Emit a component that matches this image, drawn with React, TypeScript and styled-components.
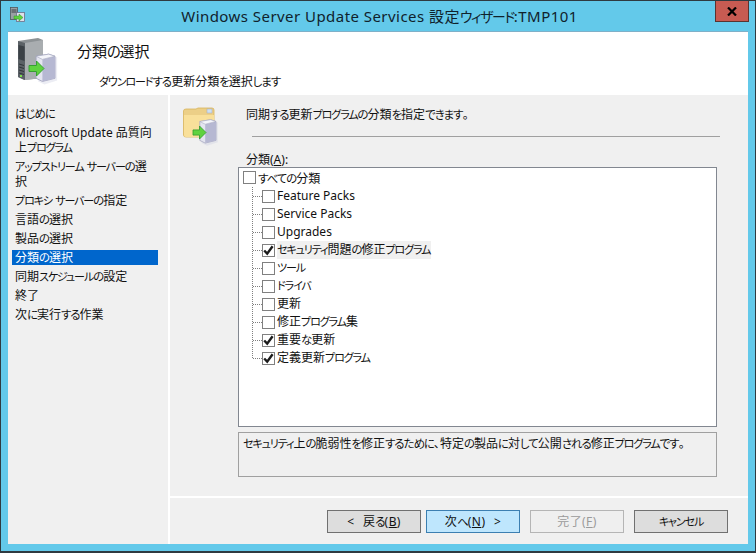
import React from 'react';
import styled, { createGlobalStyle } from 'styled-components';

const GlobalStyle = createGlobalStyle`
    html, body {
        margin: 0;
        padding: 0;
        width: 756px;
        height: 553px;
        overflow: hidden;
    }
    * {
        box-sizing: border-box;
    }
`;

const FONT = `"Noto Sans", "Noto Sans CJK JP", sans-serif`;

const Window = styled.div`
    width: 756px;
    height: 553px;
    background: #63c9ea;
    border: 1px solid #2f3a40;
    border-bottom-width: 2px;
    display: flex;
    flex-direction: column;
    font-family: ${FONT};
    font-size: 12px;
    font-feature-settings: 'palt';
    color: #111;
`;

const TitleBar = styled.div`
    height: 30px;
    display: flex;
    align-items: flex-start;
    padding-left: 9px;
    flex: none;
`;

const TitleIcon = styled.div`
    width: 16px;
    height: 16px;
    margin-top: 6px;
    flex: none;
`;

const TitleText = styled.div`
    flex: 1;
    text-align: center;
    font-size: 15px;
    line-height: 30px;
    margin-left: 18px;
    color: #10222c;
    letter-spacing: 0.45px;
`;

const CloseButton = styled.div`
    width: 34px;
    height: 21px;
    margin-right: 6px;
    background: #c75b52;
    border: 1px solid #5a3330;
    border-top: none;
    display: flex;
    align-items: center;
    justify-content: center;
    flex: none;
`;

const Client = styled.div`
    flex: 1;
    margin: 0 7px 7px;
    background: #fff;
    border-top: 1px solid #7fb0c8;
    display: flex;
    flex-direction: column;
    min-height: 0;
`;

const Header = styled.div`
    height: 63px;
    flex: none;
    display: flex;
    padding: 5px 0 0 9px;
`;

const HeaderIcon = styled.div`
    width: 44px;
    height: 48px;
    flex: none;
`;

const HeaderTexts = styled.div`
    display: flex;
    flex-direction: column;
    padding-left: 16px;
`;

const HeaderTitle = styled.div`
    font-size: 15px;
    line-height: 20px;
    margin-top: 4px;
`;

const HeaderSubtitle = styled.div`
    font-size: 12px;
    line-height: 16px;
    margin: 12px 0 0 22px;
`;

const Main = styled.div`
    flex: 1;
    display: flex;
    gap: 2px;
    min-height: 0;
`;

const Nav = styled.nav`
    width: 160px;
    flex: none;
    background: #f0f0f0;
    padding: 11px 10px 0 4px;
    display: flex;
    flex-direction: column;
    gap: 4px;
`;

const NavItem = styled.div<{ $active?: boolean }>`
    line-height: 15px;
    padding-left: 3px;
    white-space: pre-line;
    background: ${(p) => (p.$active ? '#0066cc' : 'transparent')};
    color: ${(p) => (p.$active ? '#fff' : '#111')};
`;

const Panel = styled.div`
    flex: 1;
    background: #f0f0f0;
    display: flex;
    flex-direction: column;
`;

const Content = styled.div`
    flex: 1;
    padding: 11px 31px 0 13px;
    display: flex;
    flex-direction: column;
`;

const IntroRow = styled.div`
    display: flex;
    height: 46px;
    flex: none;
`;

const FolderIcon = styled.div`
    width: 40px;
    height: 40px;
    flex: none;
`;

const IntroBody = styled.div`
    flex: 1;
    padding-left: 23px;
`;

const IntroText = styled.div`
    line-height: 16px;
    padding-top: 1px;
    margin-bottom: 13px;
`;

const IntroRule = styled.div`
    height: 1px;
    background: #a0a0a0;
    margin: 0 -3px 0 6px;
`;

const FieldLabel = styled.div`
    line-height: 15px;
    padding-left: 63px;
`;

const Underlined = styled.span`
    text-decoration: underline;
`;

const TreeBox = styled.div`
    height: 260px;
    margin-left: 55px;
    background: #fff;
    border: 1px solid #828790;
    padding: 1px 0 0 4px;
    flex: none;
`;

const RootRow = styled.div`
    display: flex;
    align-items: center;
    height: 17px;
    margin-bottom: 1px;
    gap: 2px;
`;

const TreeList = styled.div`
    margin-left: 9px;
    border-left: 1px dotted #808080;
    display: flex;
    flex-direction: column;
    height: 171px;
`;

const TreeRow = styled.div`
    position: relative;
    display: flex;
    align-items: center;
    gap: 2px;
    height: 18px;
    flex: none;
    padding-left: 9px;
    &::before {
        content: '';
        position: absolute;
        left: 0;
        top: 9px;
        width: 9px;
        border-top: 1px dotted #808080;
    }
`;

const RowLabel = styled.span<{ $selected?: boolean }>`
    line-height: 18px;
    white-space: nowrap;
    padding-right: 1px;
    background: ${(p) => (p.$selected ? '#f0f0f0' : 'transparent')};
`;

const Box = styled.span`
    width: 13px;
    height: 13px;
    border: 1px solid #808080;
    background: #fff;
    flex: none;
    display: flex;
    align-items: center;
    justify-content: center;
`;

const DescriptionBox = styled.div`
    height: 45px;
    margin: 5px 0 0 55px;
    border: 1px solid #a0a0a0;
    padding: 2px 4px;
    line-height: 17px;
    flex: none;
`;

const Footer = styled.div`
    height: 48px;
    flex: none;
    border-top: 2px solid #fff;
    display: flex;
    justify-content: flex-end;
    align-items: flex-start;
    padding: 12px 20px 0 0;
`;

const Button = styled.div<{ $variant?: 'default' | 'primary' | 'disabled' }>`
    width: 94px;
    height: 23px;
    margin-left: ${(p) => (p.$variant === 'primary' ? '5px' : '10px')};
    display: flex;
    align-items: center;
    justify-content: center;
    line-height: 21px;
    word-spacing: 5px;
    letter-spacing: 0.4px;
    white-space: pre;
    border: 1px solid
        ${(p) =>
            p.$variant === 'primary'
                ? '#3c7fb1'
                : p.$variant === 'disabled'
                  ? '#b5b5b5'
                  : '#707070'};
    background: ${(p) =>
        p.$variant === 'primary'
            ? '#bee6fd'
            : p.$variant === 'disabled'
              ? '#efefef'
              : '#dddddd'};
    color: ${(p) => (p.$variant === 'disabled' ? '#9a9a9a' : '#111')};
`;

// the reference font has narrow kana, so kana runs are set a bit smaller and tighter
const Kana = styled.span<{ $kind: 'hira' | 'kata' }>`
    font-size: ${(p) => (p.$kind === 'kata' ? '0.92em' : '0.95em')};
    letter-spacing: ${(p) => (p.$kind === 'kata' ? '-0.1em' : '-0.085em')};
`;

const Jp = ({ text }: { text: string }) => (
    <>
        {text.split(/([ァ-ヶー]+|[ぁ-ゖ]+)/).map((part, i) => {
            if (/^[ァ-ヶー]+$/.test(part)) {
                return (
                    <Kana key={i} $kind='kata'>
                        {part}
                    </Kana>
                );
            }
            if (/^[ぁ-ゖ]+$/.test(part)) {
                return (
                    <Kana key={i} $kind='hira'>
                        {part}
                    </Kana>
                );
            }
            return part;
        })}
    </>
);

const Check = () => (
    <svg width='11' height='11' viewBox='0 0 11 11'>
        <path d='M1.2 5.5 L4.2 8.6 L9.6 1.2' fill='none' stroke='#1c1c1c' strokeWidth='2.4' />
    </svg>
);

const Arrow = ({ x, y, s }: { x: number; y: number; s: number }) => (
    <path
        transform={`translate(${x} ${y}) scale(${s})`}
        d='M0 3 H5 V0 L10 5 L5 10 V7 H0 Z'
        fill='#5fd23f'
        stroke='#2f9a2a'
        strokeWidth='0.6'
    />
);

const Package = ({ x, y, s }: { x: number; y: number; s: number }) => (
    <g transform={`translate(${x} ${y}) scale(${s})`}>
        <path d='M2 5 L8 2 L20 4 V26 L8 30 L2 27 Z' fill='#c9cbe0' opacity='0.35' transform='translate(2 2)' />
        <path d='M2 5 L14 3 L20 5 V26 L8 29 L2 26 Z' fill='#e4e5ef' stroke='#a3a5bd' strokeWidth='0.8' />
        <path d='M8 8 L20 5 V26 L8 29 Z' fill='#b6b8d2' />
        <path d='M2 5 L14 3 L20 5 L8 8 Z' fill='#f4f5fa' stroke='#a3a5bd' strokeWidth='0.6' />
    </g>
);

const ServerGlyph = () => (
    <svg width='44' height='48' viewBox='0 0 44 48'>
        <path d='M1 4 L21 1 L26 3 V41 L7 43 L1 40 Z' fill='#8d9295' />
        <path d='M1 4 L8 6 V43 L1 40 Z' fill='#5b6166' />
        <path d='M8 6 L26 3 V41 L8 43 Z' fill='#a9adb0' />
        <path d='M1.5 8 L7.5 9.5 V24 L1.5 22 Z' fill='#3b4146' />
        <path d='M2 27 L7 28.5 M2 30 L7 31.5 M2 33 L7 34.5 M2 36 L7 37.5' stroke='#2f3438' strokeWidth='1' />
        <rect x='3' y='38' width='2' height='2' fill='#7ce04a' />
        <Package x={17} y={14} s={1.05} />
        <Arrow x={12} y={24} s={1.5} />
    </svg>
);

const FolderGlyph = () => (
    <svg width='40' height='40' viewBox='0 0 40 40'>
        <path d='M0.5 5 Q0.5 3 3 3 H13 L15 2 H29 Q31 2 31 4 V29 Q31 31 29 31 H3 Q0.5 31 0.5 29 Z' fill='#eccf87' stroke='#d8b45c' strokeWidth='0.8' />
        <path d='M1 9 H31 V29 Q31 31 29 31 H3 Q1 31 1 29 Z' fill='#f9e09a' />
        <rect x='24' y='3' width='5' height='4' fill='#cfe0f0' stroke='#a0a8c0' strokeWidth='0.5' />
        <Package x={15} y={11} s={0.9} />
        <Arrow x={10} y={20} s={1.3} />
    </svg>
);

const WizardGlyph = () => (
    <svg width='16' height='16' viewBox='0 0 16 16'>
        <rect x='0.5' y='0.5' width='7' height='12' fill='#9aa0a4' stroke='#50565a' strokeWidth='0.8' />
        <path d='M1.5 3 H6.5 M1.5 5 H6.5' stroke='#3b4146' strokeWidth='1' />
        <rect x='6.5' y='5.5' width='8' height='9' fill='#dfe0ea' stroke='#6d6f88' strokeWidth='0.8' />
        <path d='M4 9 H9 V7 L13 10.5 L9 14 V12 H4 Z' fill='#5fd23f' stroke='#2f9a2a' strokeWidth='0.5' />
    </svg>
);

const navItems = [
    'はじめに',
    'Microsoft Update 品質向\n上プログラム',
    'アップストリーム サーバーの選\n択',
    'プロキシ サーバーの指定',
    '言語の選択',
    '製品の選択',
    '分類の選択',
    '同期スケジュールの設定',
    '終了',
    '次に実行する作業',
];

const treeItems = [
    { label: 'Feature Packs' },
    { label: 'Service Packs' },
    { label: 'Upgrades' },
    { label: 'セキュリティ問題の修正プログラム', checked: true, selected: true },
    { label: 'ツール' },
    { label: 'ドライバ' },
    { label: '更新' },
    { label: '修正プログラム集' },
    { label: '重要な更新', checked: true },
    { label: '定義更新プログラム', checked: true },
];

const App = () => {
    return (
        <>
            <GlobalStyle />
            <Window>
                <TitleBar>
                    <TitleIcon>
                        <WizardGlyph />
                    </TitleIcon>
                    <TitleText>
                        <Jp text='Windows Server Update Services 設定ウィザード:TMP101' />
                    </TitleText>
                    <CloseButton>
                        <svg width='10' height='9' viewBox='0 0 10 9'>
                            <path d='M1 0.5 L9 8.5 M9 0.5 L1 8.5' stroke='#000' strokeWidth='2.2' />
                        </svg>
                    </CloseButton>
                </TitleBar>
                <Client>
                    <Header>
                        <HeaderIcon>
                            <ServerGlyph />
                        </HeaderIcon>
                        <HeaderTexts>
                            <HeaderTitle>
                                <Jp text='分類の選択' />
                            </HeaderTitle>
                            <HeaderSubtitle>
                                <Jp text='ダウンロードする更新分類を選択します' />
                            </HeaderSubtitle>
                        </HeaderTexts>
                    </Header>
                    <Main>
                        <Nav>
                            {navItems.map((item) => (
                                <NavItem key={item} $active={item === '分類の選択'}>
                                    <Jp text={item} />
                                </NavItem>
                            ))}
                        </Nav>
                        <Panel>
                            <Content>
                                <IntroRow>
                                    <FolderIcon>
                                        <FolderGlyph />
                                    </FolderIcon>
                                    <IntroBody>
                                        <IntroText>
                                            <Jp text='同期する更新プログラムの分類を指定できます。' />
                                        </IntroText>
                                        <IntroRule />
                                    </IntroBody>
                                </IntroRow>
                                <FieldLabel>
                                    分類(<Underlined>A</Underlined>):
                                </FieldLabel>
                                <TreeBox>
                                    <RootRow>
                                        <Box />
                                        <span>
                                            <Jp text='すべての分類' />
                                        </span>
                                    </RootRow>
                                    <TreeList>
                                        {treeItems.map((item) => (
                                            <TreeRow key={item.label}>
                                                <Box>{item.checked && <Check />}</Box>
                                                <RowLabel $selected={item.selected}>
                                                    <Jp text={item.label} />
                                                </RowLabel>
                                            </TreeRow>
                                        ))}
                                    </TreeList>
                                </TreeBox>
                                <DescriptionBox>
                                    <Jp text='セキュリティ上の脆弱性を修正するために、特定の製品に対して公開される修正プログラムです。' />
                                </DescriptionBox>
                            </Content>
                            <Footer>
                                <Button>
                                    &lt; <Jp text='戻る' />(<Underlined>B</Underlined>)
                                </Button>
                                <Button $variant='primary'>
                                    <Jp text='次へ' />(<Underlined>N</Underlined>) &gt;
                                </Button>
                                <Button $variant='disabled'>
                                    完了(<Underlined>F</Underlined>)
                                </Button>
                                <Button>
                                    <Jp text='キャンセル' />
                                </Button>
                            </Footer>
                        </Panel>
                    </Main>
                </Client>
            </Window>
        </>
    );
};

export default App;
